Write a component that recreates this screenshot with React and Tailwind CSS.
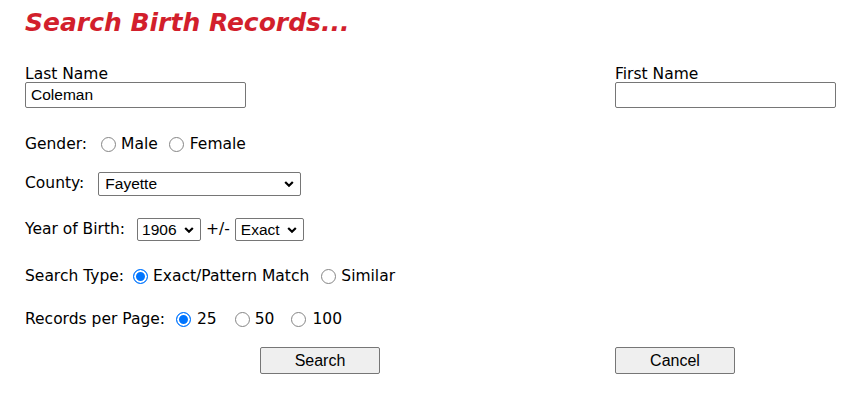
import React, { useState } from 'react';

const label = "font-['DejaVu_Sans',Verdana,sans-serif] text-[15.5px] text-black";
const control = "font-['Liberation_Sans',Arial,sans-serif] text-[15.5px] text-black";

const Radio = ({ name, checked, onChange, className = '' }) => (
  <input
    type="radio"
    name={name}
    checked={checked}
    onChange={onChange}
    className={`appearance-none w-[15px] h-[15px] mb-[2px] shrink-0 rounded-full border border-[#858585] bg-white checked:border-[#0075ff] checked:bg-[#0075ff] checked:shadow-[inset_0_0_0_2px_white] ${className}`}
  />
);

const Select = ({ value, onChange, options, width, padLeft = 'pl-[5px]' }) => (
  <span className={`relative inline-flex ${width}`}>
    <select
      value={value}
      onChange={(e) => onChange(e.target.value)}
      className={`${control} appearance-none w-full h-full border border-[#767676] rounded-[2px] bg-white ${padLeft} pr-[18px] leading-none outline-none`}
    >
      {options.map((o) => (
        <option key={o} value={o}>{o}</option>
      ))}
    </select>
    <svg className="absolute right-[7px] top-1/2 -translate-y-1/2 pointer-events-none" width="10" height="7" viewBox="0 0 10 7">
      <path d="M1.2 1.5 L5 5.2 L8.8 1.5" fill="none" stroke="#000" strokeWidth="2.2" />
    </svg>
  </span>
);

export default function App() {
  const [lastName, setLastName] = useState('Coleman');
  const [firstName, setFirstName] = useState('');
  const [gender, setGender] = useState('');
  const [county, setCounty] = useState('Fayette');
  const [year, setYear] = useState('1906');
  const [range, setRange] = useState('Exact');
  const [searchType, setSearchType] = useState('exact');
  const [perPage, setPerPage] = useState('25');

  return (
    <div className="w-[863px] h-[408px] bg-white pl-[25px] overflow-hidden">
      {/* Title */}
      <h1 className="pt-[8px] font-['DejaVu_Sans',Verdana,sans-serif] font-bold italic text-[25px] leading-[30px] text-[#d21f2c]">
        Search Birth Records...
      </h1>

      {/* Names */}
      <div className="grid grid-cols-[590px_1fr] mt-[28px]">
        <div className="flex flex-col">
          <span className={`${label} leading-[16px]`}>Last Name</span>
          <input
            value={lastName}
            onChange={(e) => setLastName(e.target.value)}
            className={`${control} w-[221px] h-[26px] border border-[#767676] rounded-[2px] px-[5px] outline-none`}
          />
        </div>
        <div className="flex flex-col">
          <span className={`${label} leading-[16px]`}>First Name</span>
          <input
            value={firstName}
            onChange={(e) => setFirstName(e.target.value)}
            className={`${control} w-[221px] h-[26px] border border-[#767676] rounded-[2px] px-[5px] outline-none`}
          />
        </div>
      </div>

      {/* Gender */}
      <div className={`${label} flex items-center h-[32px] mt-[21px]`}>
        <span>Gender:</span>
        <Radio name="gender" checked={gender === 'M'} onChange={() => setGender('M')} className="ml-[14px]" />
        <span className="ml-[5px]">Male</span>
        <Radio name="gender" checked={gender === 'F'} onChange={() => setGender('F')} className="ml-[11px]" />
        <span className="ml-[6px]">Female</span>
      </div>

      {/* County */}
      <div className={`${label} flex items-center h-[24px] mt-[11px]`}>
        <span>County:</span>
        <span className="ml-[14px] h-[24px] flex">
          <Select value={county} onChange={setCounty} options={['Fayette', 'Franklin', 'Greene']} width="w-[203px]" padLeft="pl-[6px]" />
        </span>
      </div>

      {/* Year of Birth */}
      <div className={`${label} flex items-center h-[23px] mt-[22px]`}>
        <span>Year of Birth:</span>
        <span className="ml-[12px] h-[23px] flex">
          <Select value={year} onChange={setYear} options={['1905', '1906', '1907']} width="w-[64px]" padLeft="pl-[4px]" />
        </span>
        <span className="ml-[5px]">+/-</span>
        <span className="ml-[5px] h-[23px] flex">
          <Select value={range} onChange={setRange} options={['Exact', '1', '2', '5']} width="w-[69px]" />
        </span>
      </div>

      {/* Search Type */}
      <div className={`${label} flex items-center h-[24px] mt-[24px]`}>
        <span>Search Type:</span>
        <Radio name="stype" checked={searchType === 'exact'} onChange={() => setSearchType('exact')} className="ml-[9px]" />
        <span className="ml-[5px]">Exact/Pattern Match</span>
        <Radio name="stype" checked={searchType === 'similar'} onChange={() => setSearchType('similar')} className="ml-[12px]" />
        <span className="ml-[5px]">Similar</span>
      </div>

      {/* Records per Page */}
      <div className={`${label} flex items-center h-[24px] mt-[19px]`}>
        <span>Records per Page:</span>
        <Radio name="pp" checked={perPage === '25'} onChange={() => setPerPage('25')} className="ml-[11px]" />
        <span className="ml-[6px]">25</span>
        <Radio name="pp" checked={perPage === '50'} onChange={() => setPerPage('50')} className="ml-[18px]" />
        <span className="ml-[5px]">50</span>
        <Radio name="pp" checked={perPage === '100'} onChange={() => setPerPage('100')} className="ml-[17px]" />
        <span className="ml-[6px]">100</span>
      </div>

      {/* Buttons */}
      <div className="grid grid-cols-[590px_1fr] mt-[15px]">
        <div className="flex justify-center">
          <button className={`${control} text-[16px] w-[120px] h-[27px] bg-[#efefef] border border-[#767676] rounded-[2px]`}>
            Search
          </button>
        </div>
        <div>
          <button className={`${control} text-[16px] w-[120px] h-[27px] bg-[#efefef] border border-[#767676] rounded-[2px]`}>
            Cancel
          </button>
        </div>
      </div>
    </div>
  );
}
